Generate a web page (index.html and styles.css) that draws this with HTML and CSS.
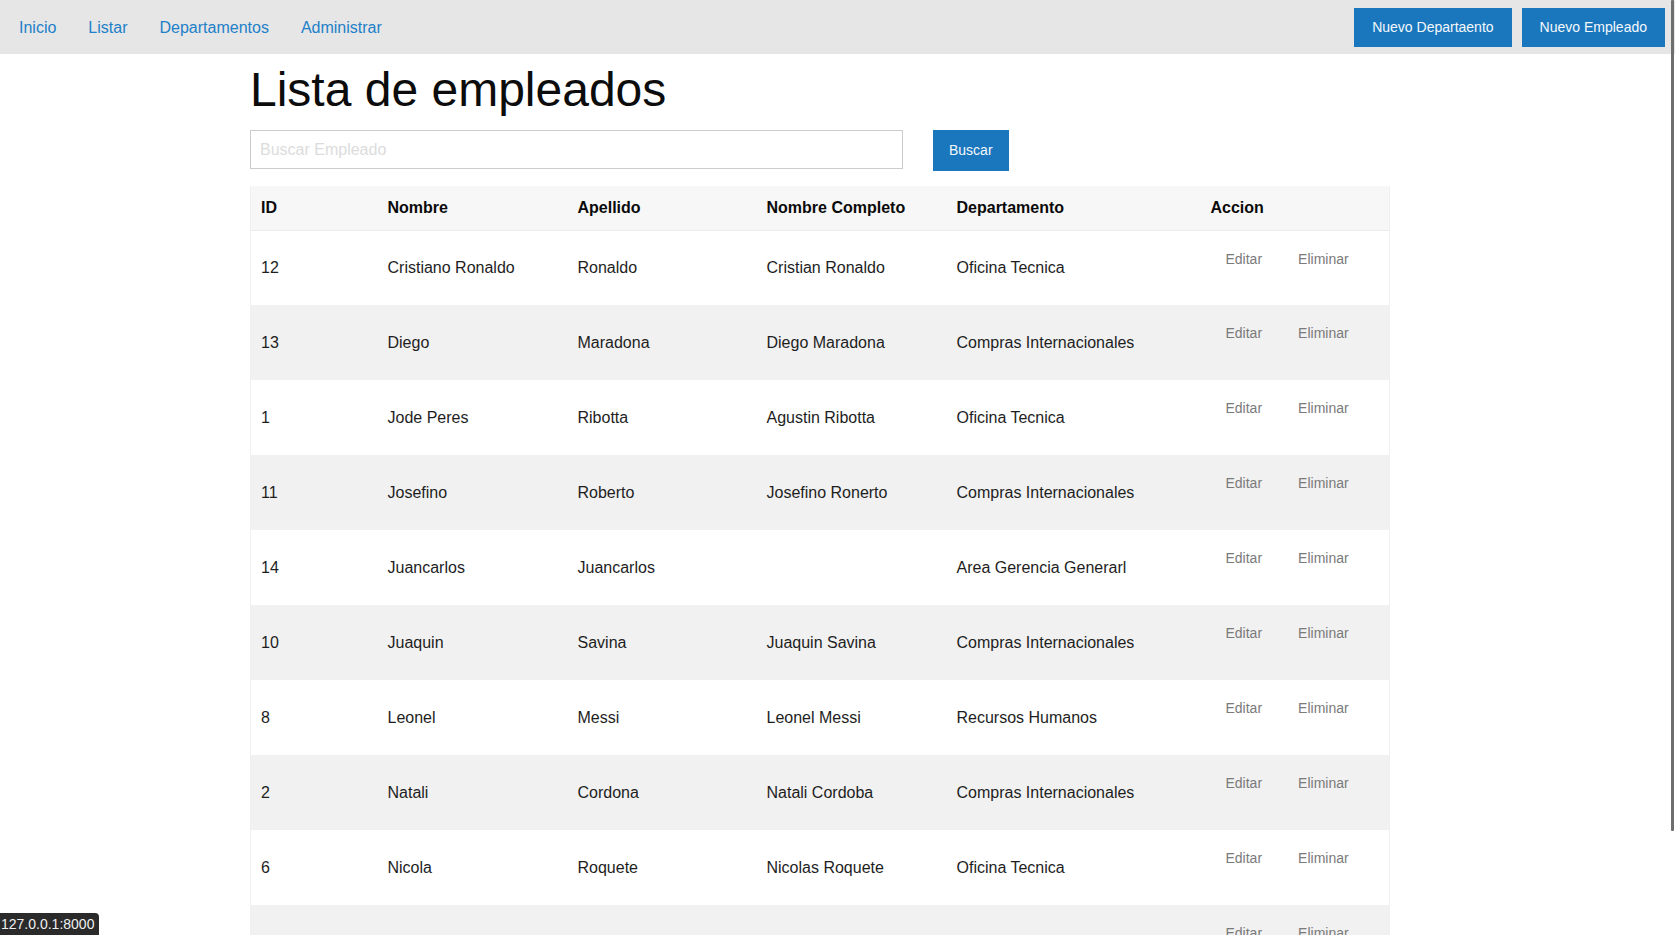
FILE: index.html
```html
<!DOCTYPE html>
<html lang="es">
<head>
<meta charset="utf-8">
<title>Lista de empleados</title>
<link rel="stylesheet" href="styles.css">
</head>
<body>
<nav class="topbar">
  <ul class="nav-links">
    <li><a href="#">Inicio</a></li>
    <li><a href="#">Listar</a></li>
    <li><a href="#">Departamentos</a></li>
    <li><a href="#">Administrar</a></li>
  </ul>
  <div class="nav-actions">
    <a class="btn btn-primary" href="#">Nuevo Departaento</a>
    <a class="btn btn-primary" href="#">Nuevo Empleado</a>
  </div>
</nav>

<main class="page">
  <h1 class="title">Lista de empleados</h1>
  <form class="search">
    <input class="search-input" type="text" placeholder="Buscar Empleado">
    <button class="btn btn-primary btn-search" type="button">Buscar</button>
  </form>

  <table class="employees">
    <colgroup>
      <col class="c-id"><col class="c-nombre"><col class="c-apellido"><col class="c-completo"><col class="c-depto"><col class="c-accion">
    </colgroup>
    <thead>
      <tr><th>ID</th><th>Nombre</th><th>Apellido</th><th>Nombre Completo</th><th>Departamento</th><th>Accion</th></tr>
    </thead>
    <tbody>
      <tr><td>12</td><td>Cristiano Ronaldo</td><td>Ronaldo</td><td>Cristian Ronaldo</td><td>Oficina Tecnica</td><td class="actions"><div class="action-group"><a class="btn-link" href="#">Editar</a><a class="btn-link" href="#">Eliminar</a></div></td></tr>
      <tr><td>13</td><td>Diego</td><td>Maradona</td><td>Diego Maradona</td><td>Compras Internacionales</td><td class="actions"><div class="action-group"><a class="btn-link" href="#">Editar</a><a class="btn-link" href="#">Eliminar</a></div></td></tr>
      <tr><td>1</td><td>Jode Peres</td><td>Ribotta</td><td>Agustin Ribotta</td><td>Oficina Tecnica</td><td class="actions"><div class="action-group"><a class="btn-link" href="#">Editar</a><a class="btn-link" href="#">Eliminar</a></div></td></tr>
      <tr><td>11</td><td>Josefino</td><td>Roberto</td><td>Josefino Ronerto</td><td>Compras Internacionales</td><td class="actions"><div class="action-group"><a class="btn-link" href="#">Editar</a><a class="btn-link" href="#">Eliminar</a></div></td></tr>
      <tr><td>14</td><td>Juancarlos</td><td>Juancarlos</td><td></td><td>Area Gerencia Generarl</td><td class="actions"><div class="action-group"><a class="btn-link" href="#">Editar</a><a class="btn-link" href="#">Eliminar</a></div></td></tr>
      <tr><td>10</td><td>Juaquin</td><td>Savina</td><td>Juaquin Savina</td><td>Compras Internacionales</td><td class="actions"><div class="action-group"><a class="btn-link" href="#">Editar</a><a class="btn-link" href="#">Eliminar</a></div></td></tr>
      <tr><td>8</td><td>Leonel</td><td>Messi</td><td>Leonel Messi</td><td>Recursos Humanos</td><td class="actions"><div class="action-group"><a class="btn-link" href="#">Editar</a><a class="btn-link" href="#">Eliminar</a></div></td></tr>
      <tr><td>2</td><td>Natali</td><td>Cordona</td><td>Natali Cordoba</td><td>Compras Internacionales</td><td class="actions"><div class="action-group"><a class="btn-link" href="#">Editar</a><a class="btn-link" href="#">Eliminar</a></div></td></tr>
      <tr><td>6</td><td>Nicola</td><td>Roquete</td><td>Nicolas Roquete</td><td>Oficina Tecnica</td><td class="actions"><div class="action-group"><a class="btn-link" href="#">Editar</a><a class="btn-link" href="#">Eliminar</a></div></td></tr>
      <tr><td></td><td></td><td></td><td></td><td></td><td class="actions"><div class="action-group"><a class="btn-link" href="#">Editar</a><a class="btn-link" href="#">Eliminar</a></div></td></tr>
    </tbody>
  </table>
</main>

<div class="scroll-thumb"></div>
<div class="status-bar">127.0.0.1:8000</div>
</body>
</html>
```

FILE: styles.css
```css
html {
  overflow: hidden;
}

body {
  margin: 0;
  background: #ffffff;
  font-family: "Liberation Sans", Arial, Helvetica, sans-serif;
  font-size: 16px;
  color: #222222;
}

a {
  text-decoration: none;
}

/* top navigation */
.topbar {
  display: flex;
  align-items: center;
  height: 54px;
  padding: 0 10px 0 3px;
  background: #e6e6e6;
}

.nav-links {
  display: flex;
  margin: 0;
  padding: 0;
  list-style: none;
}

.nav-links a {
  display: block;
  padding: 2px 16px 0;
  line-height: 52px;
  font-size: 16px;
  color: #2280c8;
}

.nav-actions {
  display: flex;
  gap: 10px;
  margin-left: auto;
}

.btn {
  display: inline-block;
  border: 0;
  font-family: inherit;
  font-size: 14px;
  cursor: pointer;
}

.btn-primary {
  background: #1a77bd;
  color: #f4f8fc;
}

.nav-actions .btn {
  height: 39px;
  line-height: 39px;
  padding: 0 18px;
}

/* page */
.page {
  width: 1139px;
  padding-left: 250px;
}

.title {
  margin: 9px 0 14px;
  font-size: 48px;
  line-height: 53px;
  font-weight: 400;
  color: #0c0c0c;
}

.search {
  display: flex;
  align-items: flex-start;
  gap: 30px;
  margin: 0 0 16px;
}

.search-input {
  box-sizing: border-box;
  width: 653px;
  height: 39px;
  padding: 0 9px;
  border: 1px solid #cccccc;
  font-family: inherit;
  font-size: 16px;
  color: #333;
  outline: none;
}

.search-input::placeholder {
  color: #dcdcdc;
}

.btn-search {
  height: 41px;
  padding: 0 16px;
  line-height: 41px;
}

/* table */
.employees {
  width: 1139px;
  margin-top: -1px;
  table-layout: fixed;
  border-collapse: collapse;
  border-left: 1px solid #f0f0f0;
  border-right: 1px solid #f0f0f0;
}

.c-id { width: 127px; }
.c-nombre { width: 190px; }
.c-apellido { width: 189px; }
.c-completo { width: 190px; }
.c-depto { width: 254px; }
.c-accion { width: 189px; }

.employees thead tr {
  height: 44px;
  background: #f7f7f7;
  border-bottom: 1px solid #ececec;
}

.employees th {
  padding: 0 10px;
  text-align: left;
  font-weight: 700;
  font-size: 16px;
  color: #0a0a0a;
  vertical-align: middle;
}

.employees tbody tr {
  height: 75px;
}

.employees tbody tr:nth-child(even) {
  background: #f1f1f1;
}

.employees td {
  padding: 1px 10px 0;
  vertical-align: middle;
  color: #1e1e1e;
  white-space: nowrap;
}

.employees td.actions {
  vertical-align: top;
  padding-top: 8px;
}

.action-group {
  display: flex;
  gap: 6px;
}

.btn-link {
  display: inline-block;
  padding: 10px 15px;
  font-size: 14px;
  line-height: 20px;
  color: #7a7a7a;
}

/* browser chrome overlays */
.scroll-thumb {
  position: fixed;
  top: 0;
  right: 1px;
  width: 3px;
  height: 831px;
  background: #6e6e6e;
  border-radius: 1px;
}

.status-bar {
  position: fixed;
  left: 0;
  bottom: 0;
  height: 22px;
  padding: 0 5px 0 1px;
  line-height: 22px;
  font-size: 14px;
  color: #f0f0f0;
  background: #2a2a2a;
  border-top-right-radius: 4px;
}
```
